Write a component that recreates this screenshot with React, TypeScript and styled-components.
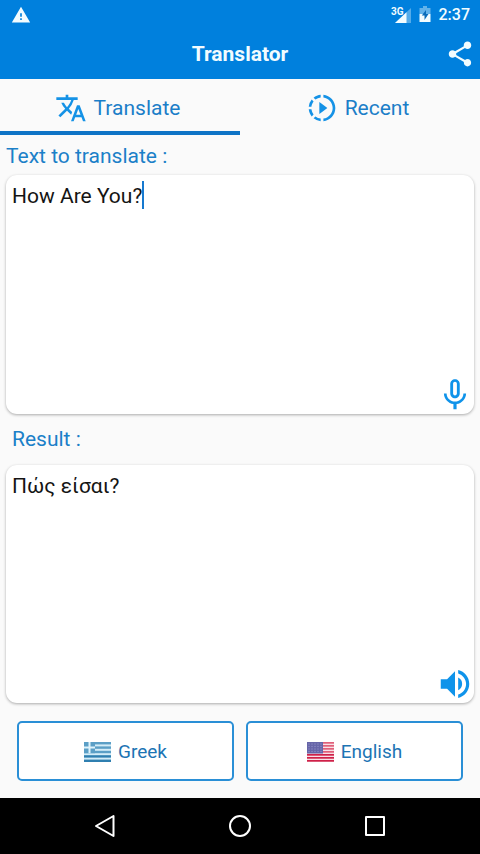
import React, { useLayoutEffect, useRef, useState } from "react";
import styled, { createGlobalStyle } from "styled-components";
import {
  MdMicNone,
  MdShare,
  MdSlowMotionVideo,
  MdTranslate,
  MdVolumeUp,
  MdWarning,
} from "react-icons/md";

const FONT = 'Roboto, "Noto Sans", sans-serif';

const GlobalStyle = createGlobalStyle`
  *, *::before, *::after { box-sizing: border-box; }
  body { margin: 0; background: #fafafa; font-family: ${FONT}; }
  button, textarea { font-family: inherit; }
`;

const Screen = styled.div`
  display: flex;
  flex-direction: column;
  min-height: 100vh;
  background: #fafafa;
`;

const TopArea = styled.header`
  background: #0080dd;
  color: #f2fcff;
`;

const StatusBar = styled.div`
  display: flex;
  align-items: center;
  justify-content: space-between;
  height: 29px;
  padding: 0 10px 0 11px;
`;

const StatusGroup = styled.div`
  display: flex;
  align-items: center;
  gap: 8px;
`;

const Clock = styled.span`
  font-size: 16px;
  line-height: 20px;
  font-weight: 500;
`;

const TitleBar = styled.div`
  display: grid;
  grid-template-columns: 40px 1fr 40px;
  align-items: center;
  height: 50px;
`;

const Title = styled.h1`
  grid-column: 2;
  margin: 0;
  text-align: center;
  font-size: 21px;
  line-height: 28px;
  font-weight: 700;
`;

const IconButton = styled.button`
  display: flex;
  align-items: center;
  justify-content: center;
  padding: 0;
  border: 0;
  background: none;
  color: inherit;
`;

const Tabs = styled.nav`
  display: grid;
  grid-template-columns: 1fr 1fr;
  height: 56px;
`;

const Tab = styled.button<{ $active?: boolean }>`
  display: flex;
  align-items: center;
  justify-content: center;
  gap: 7px;
  padding: 5px 5px 0 0;
  border: 0;
  border-bottom: 4px solid ${(p) => (p.$active ? "#0f74c6" : "transparent")};
  background: none;
  color: #1b7ec8;
  font-size: 21px;
  line-height: 28px;

  svg { color: #1592e6; }
`;

const Main = styled.main`
  flex: 1;
  display: flex;
  flex-direction: column;
  padding: 0 6px;
`;

const FieldLabel = styled.label<{ $result?: boolean }>`
  display: flex;
  align-items: center;
  height: ${(p) => (p.$result ? 51 : 40)}px;
  padding-left: ${(p) => (p.$result ? 6 : 0)}px;
  padding-top: ${(p) => (p.$result ? 0 : 2)}px;
  color: #1b80c8;
  font-size: 21px;
  line-height: 28px;
`;

const Card = styled.div`
  position: relative;
  flex: 1;
  display: flex;
  min-height: 120px;
  border-radius: 11px;
  background: #fff;
  box-shadow: 0 1px 3px rgba(0, 0, 0, 0.32);
`;

const TextBox = styled.textarea`
  flex: 1;
  width: 100%;
  padding: 7px 6px;
  border: 0;
  border-radius: 11px;
  outline: none;
  resize: none;
  background: transparent;
  color: #141414;
  caret-color: transparent;
  font-size: 21px;
  line-height: 28px;
`;

const Caret = styled.span`
  position: absolute;
  top: 6px;
  width: 2px;
  height: 28px;
  background: #1679cf;
  pointer-events: none;
`;

const CornerButton = styled(IconButton)`
  position: absolute;
  right: 0;
  bottom: 0;
  width: 38px;
  height: 38px;
  color: #0f93ea;
`;

const LanguageRow = styled.div`
  display: grid;
  grid-template-columns: 1fr 1fr;
  gap: 12px;
  padding: 18px 11px 17px;
`;

const LanguageButton = styled.button`
  display: flex;
  align-items: center;
  justify-content: center;
  gap: 7px;
  height: 60px;
  padding: 2px 0 0;
  border: 2px solid #2a8fd6;
  border-radius: 5px;
  background: #fff;
  color: #1c74b4;
  font-size: 19px;
  line-height: 24px;
`;

const SystemNav = styled.nav`
  display: flex;
  align-items: center;
  justify-content: center;
  gap: 103px;
  height: 56px;
  background: #000;
  color: #fff;
`;

const SignalIcon = () => (
  <svg width="20" height="18" viewBox="0 0 20 18" aria-hidden="true">
    <text x="0" y="9" fontSize="10" fontWeight="700" fontFamily="Roboto, sans-serif" fill="currentColor">3G</text>
    <path d="M20 2v15H4z" fill="currentColor" opacity="0.35" />
    <path d="M15.500 6.200V17H4z" fill="currentColor" />
  </svg>
);

const BatteryIcon = () => (
  <svg width="12" height="17" viewBox="0 0 12 17" aria-hidden="true">
    <path d="M4 0h4v2h3.500v6H.5V2H4z" fill="currentColor" opacity="0.4" />
    <path d="M.5 8h11v8H.5z" fill="currentColor" />
    <path d="M7 4 2.800 9.500h2.700V14l4-6H7z" fill="#0a6cba" />
  </svg>
);

const GreekFlag = () => (
  <svg width="27" height="20" viewBox="0 0 27 20" aria-hidden="true">
    <rect width="27" height="20" fill="#d4edf8" />
    {[0, 4.4, 8.8, 13.2, 17.6].map((y) => (
      <rect key={y} y={y} width="27" height="2.400" fill={y > 12 ? "#2f7fb0" : "#5b9fc6"} />
    ))}
    <rect width="11" height="11.200" fill="#5b9fc6" />
    <path d="M4.500 0h2v11.200h-2zM0 4.600h11v2H0z" fill="#dff3fb" />
  </svg>
);

const UsFlag = () => (
  <svg width="27" height="20" viewBox="0 0 27 20" aria-hidden="true">
    <rect width="27" height="20" fill="#f8dfe5" />
    {[0, 3, 6, 9, 12, 15, 18].map((y) => (
      <rect key={y} y={y} width="27" height="1.700" fill={y > 11 ? "#cf2149" : "#e0607a"} />
    ))}
    <rect width="16" height="11.500" fill="#6665a8" />
    {[2, 4.5, 7, 9.5].map((y) =>
      [2, 5, 8, 11, 14].map((x) => (
        <circle key={`${x}-${y}`} cx={x} cy={y} r="0.700" fill="#8f8ec6" />
      ))
    )}
  </svg>
);

const BackIcon = () => (
  <svg width="32" height="32" viewBox="0 0 32 32" fill="none" stroke="currentColor" strokeWidth="2" strokeLinejoin="round" aria-hidden="true">
    <path d="M24.500 6v20L7 16z" />
  </svg>
);

const HomeIcon = () => (
  <svg width="32" height="32" viewBox="0 0 32 32" fill="none" stroke="currentColor" strokeWidth="2" aria-hidden="true">
    <circle cx="16" cy="16" r="10" />
  </svg>
);

const OverviewIcon = () => (
  <svg width="32" height="32" viewBox="0 0 32 32" fill="none" stroke="currentColor" strokeWidth="2" strokeLinejoin="round" aria-hidden="true">
    <rect x="7" y="7" width="18" height="18" />
  </svg>
);

export default function App() {
  const [source, setSource] = useState("How Are You?");
  const [caretLeft, setCaretLeft] = useState(0);
  const box = useRef<HTMLTextAreaElement>(null);

  useLayoutEffect(() => {
    const context = document.createElement("canvas").getContext("2d");
    if (!context || !box.current) return;
    const style = getComputedStyle(box.current);
    context.font = `${style.fontSize} ${style.fontFamily}`;
    setCaretLeft(parseInt(style.paddingLeft, 10) + Math.round(context.measureText(source).width));
  }, [source]);

  return (
    <Screen>
      <GlobalStyle />
      <TopArea>
        <StatusBar>
          <MdWarning size={20} />
          <StatusGroup>
            <SignalIcon />
            <BatteryIcon />
            <Clock>2:37</Clock>
          </StatusGroup>
        </StatusBar>
        <TitleBar>
          <Title>Translator</Title>
          <IconButton aria-label="Share">
            <MdShare size={30} />
          </IconButton>
        </TitleBar>
      </TopArea>
      <Tabs>
        <Tab $active aria-current="page">
          <MdTranslate size={32} />
          Translate
        </Tab>
        <Tab>
          <MdSlowMotionVideo size={32} />
          Recent
        </Tab>
      </Tabs>
      <Main>
        <FieldLabel htmlFor="source">Text to translate :</FieldLabel>
        <Card>
          <TextBox
            id="source"
            ref={box}
            value={source}
            spellCheck={false}
            onChange={(e) => setSource(e.target.value)}
          />
          <Caret style={{ left: caretLeft }} />
          <CornerButton aria-label="Speak">
            <MdMicNone size={38} />
          </CornerButton>
        </Card>
        <FieldLabel htmlFor="result" $result>Result :</FieldLabel>
        <Card>
          <TextBox id="result" readOnly spellCheck={false} value="Πώς είσαι?" />
          <CornerButton aria-label="Listen">
            <MdVolumeUp size={38} />
          </CornerButton>
        </Card>
        <LanguageRow>
          <LanguageButton>
            <GreekFlag />
            Greek
          </LanguageButton>
          <LanguageButton>
            <UsFlag />
            English
          </LanguageButton>
        </LanguageRow>
      </Main>
      <SystemNav aria-label="System">
        <IconButton aria-label="Back"><BackIcon /></IconButton>
        <IconButton aria-label="Home"><HomeIcon /></IconButton>
        <IconButton aria-label="Overview"><OverviewIcon /></IconButton>
      </SystemNav>
    </Screen>
  );
}
